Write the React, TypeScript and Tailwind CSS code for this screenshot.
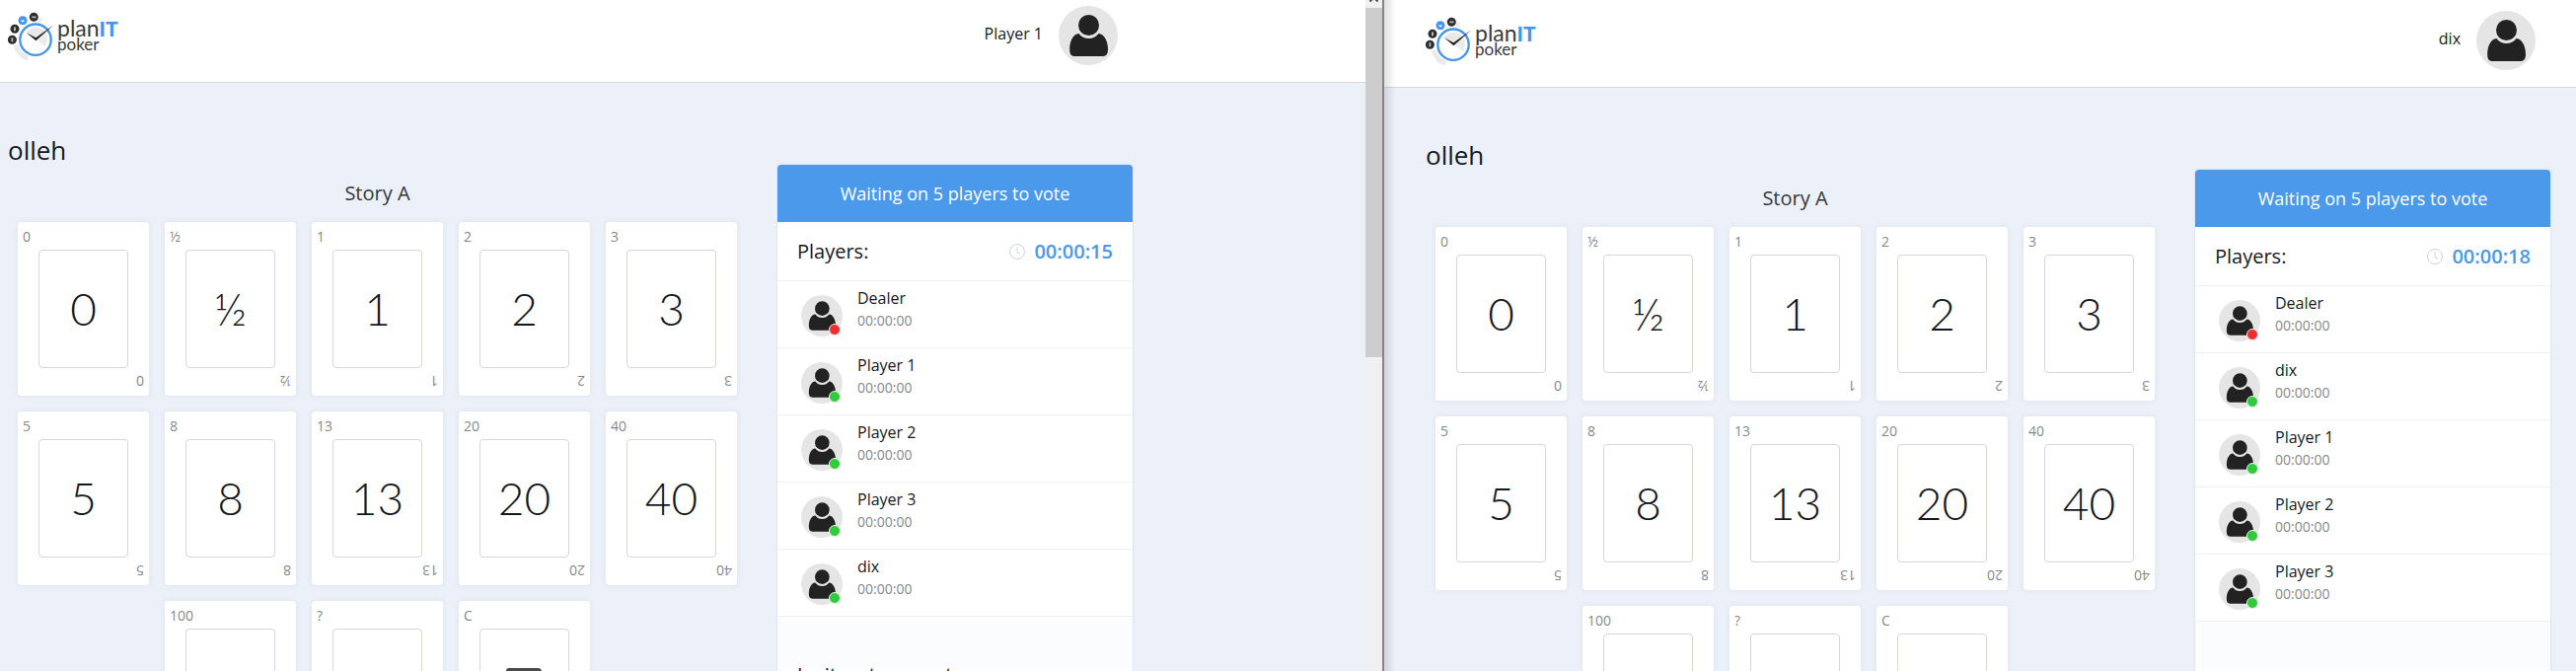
import React from "react";

type Player = { name: string; dealer?: boolean };

type Room = {
  user: string;
  timer: string;
  players: Player[];
};

const leftRoom: Room = {
  user: "Player 1",
  timer: "00:00:15",
  players: [
    { name: "Dealer", dealer: true },
    { name: "Player 1" },
    { name: "Player 2" },
    { name: "Player 3" },
    { name: "dix" },
  ],
};

const rightRoom: Room = {
  user: "dix",
  timer: "00:00:18",
  players: [
    { name: "Dealer", dealer: true },
    { name: "dix" },
    { name: "Player 1" },
    { name: "Player 2" },
    { name: "Player 3" },
  ],
};

const deck = ["0", "½", "1", "2", "3", "5", "8", "13", "20", "40", "100", "?", "C"];

function Logo() {
  return (
    <svg viewBox="8 6 114 60" className="h-[60px] w-[114px]" role="img" aria-label="planIT poker">
      <path d="M13.500 46 C15.500 53 20 59 28 62 L29 56.500 C23.500 54 19.500 50 18 45 Z" fill="#ebebeb" />
      <path d="M39.500 17.500 L43.500 18.500 L41.500 22.500 L37.500 21.500 Z" fill="#ededed" />
      <circle cx="36" cy="40.200" r="15.700" fill="#fff" stroke="#4396ec" strokeWidth="2.300" />
      <path d="M36 39.500 L26.500 33 A12.500 12.500 0 0 1 45.500 31.500 Z" fill="#e8e8e8" />
      <path d="M36 39.500 L45.500 31.500 A12.500 12.500 0 0 1 45.500 47 Z" fill="#ececec" />
      <path d="M26.800 33.200 L36.300 38.300 L54.500 25.300 L36.400 41.200 Z" fill="#222" />
      <g fill="#2e2e2e">
        <circle cx="34.300" cy="17.300" r="4.500" />
        <circle cx="15" cy="29.300" r="4.500" />
        <circle cx="12.400" cy="40.200" r="4.500" />
      </g>
      <circle cx="23" cy="20.700" r="4.500" fill="#4396ec" />
      <path d="M32.300 16.500 H36.500 V18.200 H32.300 Z M14 27.500 H16 V31.200 H14 Z M11.500 38.300 H13.300 V42.200 H11.500 Z" fill="#b5b5b5" />
      <path d="M20.800 20.500 H25.200 L23 22.800 Z" fill="#fff" />
      <text x="58" y="37" fontSize="23" fill="#3b3b3b" className="font-['Lato',sans-serif] font-normal">
        plan
        <tspan fontSize="21" fill="#4396ec" className="font-black">
          IT
        </tspan>
      </text>
      <text x="58" y="51" fontSize="17" fill="#3b3b3b" className="font-['Lato',sans-serif] font-normal">
        poker
      </text>
    </svg>
  );
}

function Avatar({ className }: { className: string }) {
  return (
    <svg viewBox="0 0 60 60" className={className} aria-hidden="true">
      <circle cx="30" cy="30" r="30" fill="#e5e5e5" />
      <path
        d="M20.500 28 C23 31.500 26.500 33 30.500 33 C34.500 33 38 31.500 40.500 28 C46.500 28.500 50 36 50 44 C50 48.500 48.500 51 44.500 51 H16.500 C12.500 51 11.200 48.500 11.200 44 C11.200 36 14.500 28.500 20.500 28 Z"
        fill="#222"
      />
      <circle cx="30.500" cy="19.500" r="11.600" fill="#e5e5e5" />
      <circle cx="30.500" cy="19.500" r="10.500" fill="#222" />
    </svg>
  );
}

function Coffee() {
  return (
    <svg viewBox="0 0 50 42" className="h-[42px] w-[50px]" aria-hidden="true">
      <path
        d="M9 1 H38 Q42 1 42 5 V8 Q49 8 49 15 Q49 23 40 23 Q38 33 30 33 H17 Q8 31 6 15 V4 Q6 1 9 1 Z"
        fill="#4a4a4a"
      />
    </svg>
  );
}

function Card({ value }: { value: string }) {
  return (
    <button
      type="button"
      aria-label={`Vote ${value}`}
      className="flex h-44 w-[133px] flex-col rounded bg-white px-[5px] text-sm leading-5 text-[#85888b] shadow-[0_0_6px_rgba(60,80,60,0.08)]"
    >
      <span className="h-7 self-start pt-[5px]">{value}</span>
      <span className="mx-4 flex h-[120px] w-[91px] items-center justify-center rounded border border-[#d5d6df] font-['Lato',sans-serif] text-[46px] leading-none font-light text-[#15191f]">
        {value === "C" ? <Coffee /> : value}
      </span>
      <span className="h-7 rotate-180 self-end pt-[5px]">{value}</span>
    </button>
  );
}

function Session({ room }: { room: Room }) {
  return (
    <>
      <header className="border-b border-[#d5d8de] bg-white pb-[17px]">
        <div className="flex max-w-[1140px] items-center justify-between pr-[15px]">
          <a href="#home">
            <Logo />
          </a>
          <div className="flex items-center gap-4">
            <span className="pb-1 text-base leading-6">{room.user}</span>
            <Avatar className="size-[60px]" />
          </div>
        </div>
      </header>
      <main className="grid max-w-[1140px] grid-cols-[minmax(0,1fr)_360px] gap-x-[31px] pt-[53px]">
        <h1 className="col-span-2 text-[26px] leading-[30px]">olleh</h1>
        <section>
          <h2 className="py-[15px] text-center text-xl leading-7 text-[#33373c]">Story A</h2>
          <div className="flex flex-wrap justify-center gap-4">
            {deck.map((value) => (
              <Card key={value} value={value} />
            ))}
          </div>
        </section>
        <aside className="self-start rounded bg-[#fafcfe] shadow-[0_0_2px_rgba(80,90,120,0.25)]">
          <p className="rounded-t bg-[#4b99ea] text-center text-lg leading-[58px] text-white">
            Waiting on 5 players to vote
          </p>
          <div className="flex h-[60px] items-center justify-between border-b border-[#eff0f2] bg-white px-5 text-xl leading-7">
            <h3>Players:</h3>
            <div className="flex items-center gap-2 font-semibold text-[#4b99ea]">
              <svg viewBox="0 0 18 18" className="size-[18px]" fill="none" stroke="#cfd2d6" aria-hidden="true">
                <circle cx="9" cy="9" r="7.500" />
                <path d="M9 4 V10 L12 11" />
              </svg>
              {room.timer}
            </div>
          </div>
          <ul>
            {room.players.map((player) => (
              <li key={player.name} className="flex h-[68px] gap-[15px] border-b border-[#eff0f2] bg-white pl-6">
                <div className="relative mt-3.5 size-[42px]">
                  <Avatar className="size-[42px]" />
                  <span
                    className={
                      player.dealer
                        ? "absolute right-0.5 bottom-px size-3 rounded-full border border-[#f3e8e8] bg-[#ef2f2f]"
                        : "absolute right-0.5 bottom-px size-3 rounded-full border border-[#e8f3e8] bg-[#2fcb3a]"
                    }
                  />
                </div>
                <div className="flex flex-col gap-0.5 pt-1.5">
                  <span className="text-base leading-[22px]">{player.name}</span>
                  <span className="text-sm leading-5 text-[#85888b]">00:00:00</span>
                </div>
              </li>
            ))}
          </ul>
          <h3 className="px-5 pt-[45px] pb-8 text-xl leading-7">Invite a teammate</h3>
        </aside>
      </main>
    </>
  );
}

export default function App() {
  return (
    <div className="grid h-screen grid-cols-[minmax(0,1384fr)_17px_2px_minmax(0,1208fr)] overflow-hidden bg-[#ecf1f9] font-['Open_Sans','Noto_Sans',sans-serif] text-[#15191f]">
      <div className="overflow-hidden [&_header]:pt-1.5 [&_header]:pl-2 [&>main]:ml-2">
        <Session room={leftRoom} />
      </div>
      <div className="flex flex-col bg-[#f0f0f0]">
        <svg viewBox="0 0 17 8" className="h-2 w-[17px]" fill="none" stroke="#505050" strokeWidth="2" aria-hidden="true">
          <path d="M4.500 1.500 L8.500 -2.500 L12.500 1.500" />
        </svg>
        <div className="h-[52%] bg-[#cdcdcd]" />
      </div>
      <div className="bg-[#858585]" />
      <div className="relative overflow-hidden [&_header]:pt-[11px] [&_header]:pl-[42px] [&>main]:ml-[42px]">
        <Session room={rightRoom} />
        <div className="pointer-events-none absolute inset-y-0 left-0 w-3 bg-linear-to-r from-black/12 to-transparent" />
      </div>
    </div>
  );
}
